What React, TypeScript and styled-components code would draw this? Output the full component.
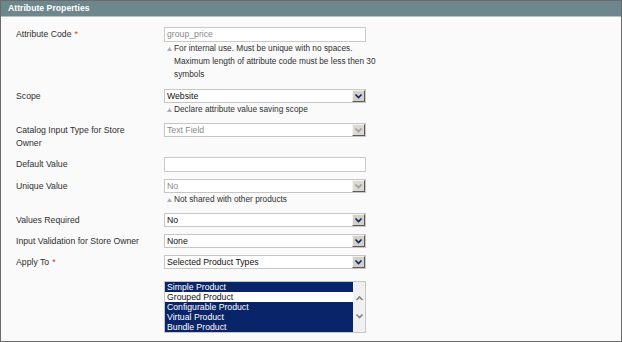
import React from "react";
import styled, { createGlobalStyle } from "styled-components";

const GlobalStyle = createGlobalStyle`
  html, body {
    margin: 0;
    padding: 0;
    background: #ffffff;
  }
  body {
    font-family: "Liberation Sans", Arial, sans-serif;
  }
`;

const Frame = styled.div`
  width: 622px;
  height: 342px;
  box-sizing: border-box;
  border: 1px solid #6b6b6b;
  background: #fafafa;
  overflow: hidden;
`;

const Header = styled.div`
  height: 15px;
  padding-left: 7px;
  background: #6e878d;
  border-bottom: 1px solid #b8c2c4;
  color: #ffffff;
  font-weight: bold;
  font-size: 8.7px;
  line-height: 15px;
`;

const Body = styled.div`
  padding: 0 0 0 15px;
`;

const Row = styled.div<{ $gap: number }>`
  display: grid;
  grid-template-columns: 148px 202px;
  margin-top: ${(p) => p.$gap}px;
`;

const Label = styled.div`
  color: #2f2f2f;
  font-size: 8.7px;
  line-height: 13px;
  padding-top: 1px;
  padding-right: 20px;
`;

const Required = styled.span`
  color: #eb340a;
  margin-left: 3px;
`;

const Field = styled.div`
  display: flex;
  flex-direction: column;
  min-width: 0;
`;

const TextBox = styled.div<{ $disabled?: boolean }>`
  height: 15px;
  box-sizing: border-box;
  border: 1px solid #c9c9c9;
  background: #ffffff;
  padding-left: 2px;
  color: ${(p) => (p.$disabled ? "#8a8a8a" : "#222")};
  font-size: 8.7px;
  line-height: 13px;
`;

const SelectBox = styled.div<{ $disabled?: boolean }>`
  height: 14px;
  box-sizing: border-box;
  border: 1px solid #c6c6c6;
  background: #ffffff;
  display: flex;
  align-items: stretch;
  color: ${(p) => (p.$disabled ? "#8a8a8a" : "#111")};
  font-size: 8.7px;
  line-height: 12px;
`;

const SelectValue = styled.div`
  flex: 1;
  padding-left: 2px;
  white-space: nowrap;
`;

const ArrowButton = styled.div<{ $disabled?: boolean }>`
  width: 13px;
  box-sizing: border-box;
  background: ${(p) => (p.$disabled ? "#dcd9d3" : "#d4d0c8")};
  border-top: 1px solid #f4f3f0;
  border-left: 1px solid #f4f3f0;
  border-right: 1px solid #5a5a5a;
  border-bottom: 1px solid #5a5a5a;
  display: flex;
  align-items: center;
  justify-content: center;
`;

const Hint = styled.div`
  display: flex;
  align-items: center;
  color: #303030;
  font-size: 8.3px;
  line-height: 13px;
  height: 13px;
  white-space: nowrap;
`;

const HintMark = styled.span`
  width: 10px;
  flex: none;
  display: flex;
  align-items: center;
  padding-left: 3px;
  box-sizing: border-box;
`;

const ListBox = styled.div`
  height: 52px;
  box-sizing: border-box;
  border: 1px solid #c6c6c6;
  background: #ffffff;
  display: flex;
`;

const Options = styled.div`
  flex: 1;
`;

const Option = styled.div<{ $selected?: boolean }>`
  height: 10px;
  line-height: 10px;
  padding-left: 2px;
  font-size: 8.7px;
  background: ${(p) => (p.$selected ? "#0a246a" : "#ffffff")};
  color: ${(p) => (p.$selected ? "#ffffff" : "#111")};
`;

const ScrollBar = styled.div`
  width: 12px;
  background: #f0f0f0;
  display: flex;
  flex-direction: column;
  justify-content: center;
  align-items: center;
  gap: 12px;
`;

const Chevron = ({ color, up }: { color: string; up?: boolean }) => (
  <svg width="9" height="6" viewBox="0 0 9 6">
    <polyline
      points={up ? "1.5,5 4.5,2 7.5,5" : "1.5,1.5 4.5,4.5 7.5,1.5"}
      fill="none"
      stroke={color}
      strokeWidth="1.6"
    />
  </svg>
);

const Triangle = () => (
  <svg width="5" height="4" viewBox="0 0 5 4">
    <polygon points="2.5,0 5,4 0,4" fill="#aab0b5" />
  </svg>
);

const Select = ({ value, disabled }: { value: string; disabled?: boolean }) => (
  <SelectBox $disabled={disabled}>
    <SelectValue>{value}</SelectValue>
    <ArrowButton $disabled={disabled}>
      <Chevron color={disabled ? "#9a9a9a" : "#0a246a"} />
    </ArrowButton>
  </SelectBox>
);

const HintLine = ({ text, mark = true }: { text: string; mark?: boolean }) => (
  <Hint>
    <HintMark>{mark && <Triangle />}</HintMark>
    <span>{text}</span>
  </Hint>
);

const productTypes = [
  { name: "Simple Product", selected: true },
  { name: "Grouped Product", selected: false },
  { name: "Configurable Product", selected: true },
  { name: "Virtual Product", selected: true },
  { name: "Bundle Product", selected: true },
];

const App = () => {
  return (
    <>
      <GlobalStyle />
      <Frame>
        <Header>Attribute Properties</Header>
        <Body>
          <Row $gap={10}>
            <Label>
              Attribute Code<Required>*</Required>
            </Label>
            <Field>
              <TextBox $disabled>group_price</TextBox>
              <HintLine text="For internal use. Must be unique with no spaces." />
              <HintLine mark={false} text="Maximum length of attribute code must be less then 30" />
              <HintLine mark={false} text="symbols" />
            </Field>
          </Row>
          <Row $gap={8}>
            <Label>Scope</Label>
            <Field>
              <Select value="Website" />
              <HintLine text="Declare attribute value saving scope" />
            </Field>
          </Row>
          <Row $gap={7}>
            <Label>Catalog Input Type for Store Owner</Label>
            <Field>
              <Select value="Text Field" disabled />
            </Field>
          </Row>
          <Row $gap={7}>
            <Label>Default Value</Label>
            <Field>
              <TextBox />
            </Field>
          </Row>
          <Row $gap={7}>
            <Label>Unique Value</Label>
            <Field>
              <Select value="No" disabled />
              <HintLine text="Not shared with other products" />
            </Field>
          </Row>
          <Row $gap={7}>
            <Label>Values Required</Label>
            <Field>
              <Select value="No" />
            </Field>
          </Row>
          <Row $gap={7}>
            <Label>Input Validation for Store Owner</Label>
            <Field>
              <Select value="None" />
            </Field>
          </Row>
          <Row $gap={7}>
            <Label>
              Apply To<Required>*</Required>
            </Label>
            <Field>
              <Select value="Selected Product Types" />
            </Field>
          </Row>
          <Row $gap={12}>
            <Label />
            <Field>
              <ListBox>
                <Options>
                  {productTypes.map((t) => (
                    <Option key={t.name} $selected={t.selected}>
                      {t.name}
                    </Option>
                  ))}
                </Options>
                <ScrollBar>
                  <Chevron color="#808080" up />
                  <Chevron color="#808080" />
                </ScrollBar>
              </ListBox>
            </Field>
          </Row>
        </Body>
      </Frame>
    </>
  );
};

export default App;
